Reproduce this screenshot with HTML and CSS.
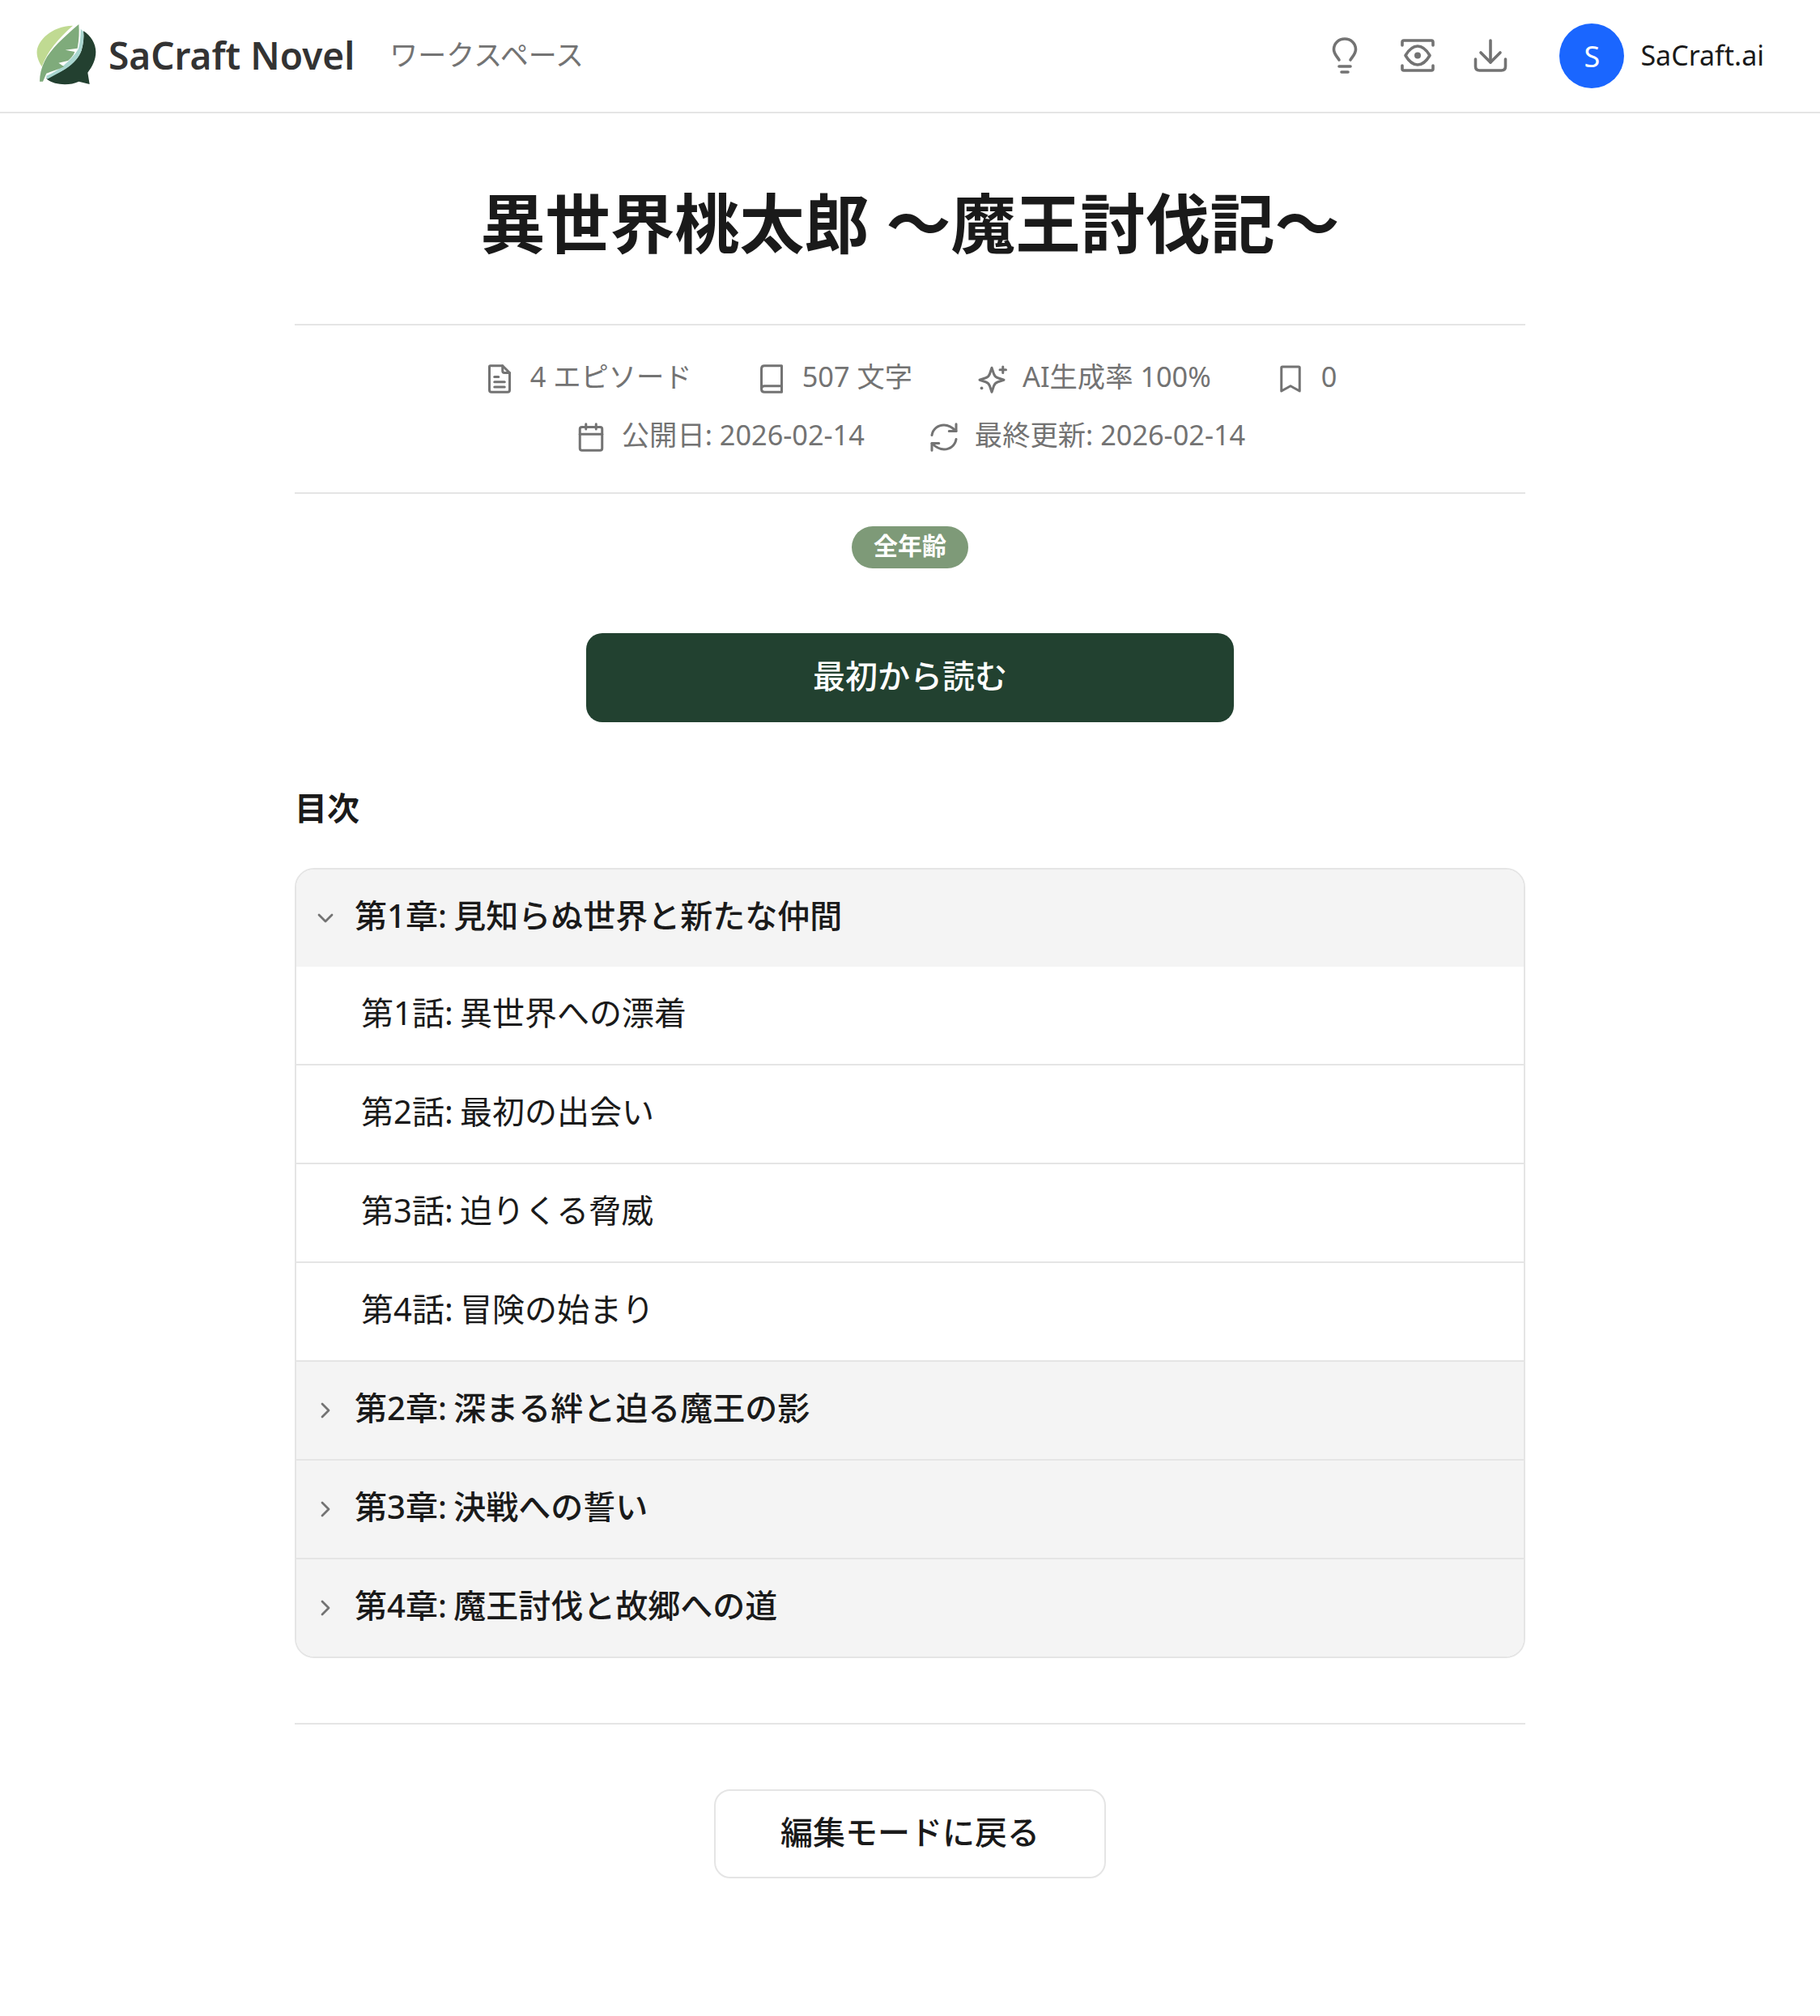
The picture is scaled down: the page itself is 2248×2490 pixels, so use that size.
FILE: index.html
```html
<!DOCTYPE html>
<html lang="ja">
<head>
    <meta charset="UTF-8">
    <meta name="viewport" content="width=device-width, initial-scale=1.0">
    <title>異世界桃太郎 〜魔王討伐記〜 - SaCraft Novel</title>
    <link rel="stylesheet" href="styles.css">
</head>
<body>
    <header class="topbar">
        <div class="topbar-left">
            <svg class="logo" viewBox="48 30 240 240" aria-hidden="true">
                <path d="M222 58 C250 75 268 105 268 135 C268 165 255 190 238 212 L245 255 L205 245 C170 262 115 258 88 238 L85 232 C130 215 195 185 215 130 C222 105 225 80 222 58 Z" fill="#234030"/>
                <path d="M212 50 L222 60 C224 85 222 105 215 130 C205 160 175 190 140 208 L88 236 L84 224 C130 205 175 170 203 125 C210 100 212 75 212 50 Z" fill="#a9d6cf"/>
                <path d="M205 33 C207 60 206 90 200 122 L155 128 L190 135 C185 150 175 160 165 168 L130 176 L150 190 C130 200 105 208 85 215 L72 245 L60 245 C60 220 66 195 78 170 C100 125 150 80 205 33 Z" fill="#7fab7b"/>
                <path d="M183 38 C130 85 90 130 68 190 C55 170 48 150 50 130 C55 95 100 40 183 38 Z" fill="#c0da92"/>
            </svg>
            <span class="brand">SaCraft Novel</span>
            <a class="nav-link">ワークスペース</a>
        </div>
        <div class="topbar-right">
            <svg class="tool-icon" viewBox="0 0 48 48" aria-hidden="true">
                <path d="M17 29 C15 25 10.5 22 10.5 16 C10.5 8.5 16.5 3 24 3 C31.5 3 37.5 8.5 37.5 16 C37.5 22 33 25 31 29"/>
                <path d="M17 37 H31"/>
                <path d="M20 44 H28"/>
            </svg>
            <svg class="tool-icon" viewBox="0 0 48 48" aria-hidden="true">
                <path d="M5 11 V7 Q5 5 7 5 H41 Q43 5 43 7 V11"/>
                <path d="M5 36 V40 Q5 42 7 42 H41 Q43 42 43 40 V36"/>
                <path d="M9 23.5 C14 15 19 12 24 12 C29 12 34 15 39 23.5 C34 32 29 35 24 35 C19 35 14 32 9 23.5 Z"/>
                <circle class="filled" cx="24" cy="23.5" r="4"/>
            </svg>
            <svg class="tool-icon" viewBox="0 0 48 48" aria-hidden="true">
                <path d="M24 5 V32"/>
                <path d="M12 20 L24 32 L36 20"/>
                <path d="M5.5 28 V37 Q5.5 42 10.5 42 H37.5 Q42.5 42 42.5 37 V28"/>
            </svg>
            <div class="user">
                <span class="avatar">S</span>
                <span class="user-name">SaCraft.ai</span>
            </div>
        </div>
    </header>

    <main class="content">
        <h1 class="work-title">異世界桃太郎 〜魔王討伐記〜</h1>

        <div class="meta">
            <div class="meta-row">
                <span class="meta-item">
                    <svg class="meta-icon" viewBox="0 0 32 32" aria-hidden="true">
                        <path d="M7 3 H19 L26 10 V27 Q26 29 24 29 H8 Q6 29 6 27 V4 Q6 3 7 3 Z"/>
                        <path d="M19 3 V8 Q19 10 21 10 H26"/>
                        <path d="M11 14 H15"/>
                        <path d="M11 19 H21"/>
                        <path d="M11 24 H21"/>
                    </svg>
                    4 エピソード
                </span>
                <span class="meta-item">
                    <svg class="meta-icon" viewBox="0 0 32 32" aria-hidden="true">
                        <path d="M6 26 V6 Q6 3 9 3 H26 V29 H9 Q6 29 6 26 Q6 23 9 23 H26"/>
                    </svg>
                    507 文字
                </span>
                <span class="meta-item">
                    <svg class="meta-icon" viewBox="0 0 32 32" aria-hidden="true">
                        <path d="M16 5 L18 11 Q19 14 22 15 L28 17 L22 19 Q19 20 18 23 L16 29 L14 23 Q13 20 10 19 L4 17 L10 15 Q13 14 14 11 Z"/>
                        <path d="M27 4 V10"/>
                        <path d="M24 7 H30"/>
                        <circle class="filled" cx="6" cy="25" r="1.5"/>
                    </svg>
                    AI生成率 100%
                </span>
                <span class="meta-item">
                    <svg class="meta-icon" viewBox="0 0 32 32" aria-hidden="true">
                        <path d="M7 28 V5 Q7 4 8 4 H24 Q25 4 25 5 V28 L16 23 Z"/>
                    </svg>
                    0
                </span>
            </div>
            <div class="meta-row">
                <span class="meta-item">
                    <svg class="meta-icon" viewBox="0 0 32 32" aria-hidden="true">
                        <path d="M5 8 Q5 6 7 6 H25 Q27 6 27 8 V27 Q27 29 25 29 H7 Q5 29 5 27 Z"/>
                        <path d="M5 13 H27"/>
                        <path d="M11 3 V8"/>
                        <path d="M21 3 V8"/>
                    </svg>
                    公開日: 2026-02-14
                </span>
                <span class="meta-item">
                    <svg class="meta-icon" viewBox="0 0 32 32" aria-hidden="true">
                        <path d="M4 14 C5 8 10 4 16 4 C21 4 24 6 28 10"/>
                        <path d="M28 3 V10 H21"/>
                        <path d="M28 18 C27 24 22 28 16 28 C11 28 8 26 4 22"/>
                        <path d="M4 29 V22 H11"/>
                    </svg>
                    最終更新: 2026-02-14
                </span>
            </div>
        </div>

        <div class="badge-row">
            <span class="badge">全年齢</span>
        </div>

        <div class="primary-row">
            <button class="btn-primary" type="button">最初から読む</button>
        </div>

        <h2 class="toc-title">目次</h2>

        <div class="toc">
            <div class="chapter chapter-open">
                <svg class="chevron" viewBox="0 0 24 24" aria-hidden="true"><path d="M4 8 L12 16 L20 8"/></svg>
                <span class="row-label">第1章: 見知らぬ世界と新たな仲間</span>
            </div>
            <a class="episode"><span class="row-label">第1話: 異世界への漂着</span></a>
            <a class="episode"><span class="row-label">第2話: 最初の出会い</span></a>
            <a class="episode"><span class="row-label">第3話: 迫りくる脅威</span></a>
            <a class="episode"><span class="row-label">第4話: 冒険の始まり</span></a>
            <div class="chapter">
                <svg class="chevron" viewBox="0 0 24 24" aria-hidden="true"><path d="M8 4 L16 12 L8 20"/></svg>
                <span class="row-label">第2章: 深まる絆と迫る魔王の影</span>
            </div>
            <div class="chapter">
                <svg class="chevron" viewBox="0 0 24 24" aria-hidden="true"><path d="M8 4 L16 12 L8 20"/></svg>
                <span class="row-label">第3章: 決戦への誓い</span>
            </div>
            <div class="chapter">
                <svg class="chevron" viewBox="0 0 24 24" aria-hidden="true"><path d="M8 4 L16 12 L8 20"/></svg>
                <span class="row-label">第4章: 魔王討伐と故郷への道</span>
            </div>
        </div>

        <div class="back-row">
            <button class="btn-back" type="button">編集モードに戻る</button>
        </div>
    </main>
</body>
</html>
```

FILE: styles.css
```css
:root {
    --text-color: #1a1a1a;
    --muted-color: #737373;
    --border-color: #e5e5e5;
    --primary-color: #224130;
    --sage-color: #7e9a78;
    --blue-color: #1a66ff;
    --panel-color: #f4f4f4;
}

body {
    margin: 0;
    background-color: #fff;
    color: var(--text-color);
    font-family: 'Noto Sans', 'Noto Sans CJK JP', sans-serif;
}

.topbar {
    display: flex;
    justify-content: space-between;
    align-items: center;
    box-sizing: border-box;
    height: 140px;
    padding: 0 69px 0 45px;
    border-bottom: 2px solid var(--border-color);
}

.topbar-left {
    display: flex;
    align-items: center;
}

.logo {
    width: 80px;
    height: 80px;
    margin-right: 9px;
}

.brand {
    padding-bottom: 2px;
    font-size: 46px;
    font-weight: 600;
    color: #333;
    margin-right: 43px;
}

.nav-link {
    padding-bottom: 8px;
    font-size: 35px;
    color: var(--muted-color);
}

.topbar-right {
    display: flex;
    align-items: center;
}

.tool-icon {
    width: 48px;
    height: 48px;
    margin-right: 42px;
    fill: none;
    stroke: var(--muted-color);
    stroke-width: 3.6;
    stroke-linecap: round;
    stroke-linejoin: round;
}

.tool-icon .filled {
    fill: var(--muted-color);
    stroke: none;
}

.user {
    display: flex;
    align-items: center;
    margin-left: 19px;
}

.avatar {
    display: flex;
    justify-content: center;
    align-items: center;
    width: 80px;
    height: 80px;
    margin-right: 20px;
    border-radius: 50%;
    background-color: var(--blue-color);
    color: #fff;
    font-size: 36px;
}

.user-name {
    padding-bottom: 3px;
    font-size: 34px;
}

.content {
    box-sizing: border-box;
    width: 1520px;
    margin: 0 auto;
}

.work-title {
    margin: 0;
    padding: 71px 0 61px;
    font-size: 80px;
    line-height: 128px;
    font-weight: 700;
    text-align: center;
}

.meta {
    display: flex;
    flex-direction: column;
    gap: 24px;
    padding: 39px 0 47px;
    border-top: 2px solid var(--border-color);
    border-bottom: 2px solid var(--border-color);
    color: var(--muted-color);
    font-size: 34.3px;
    line-height: 48px;
}

.meta-row {
    display: flex;
    justify-content: center;
    gap: 78px;
}

.meta-item {
    display: flex;
    align-items: center;
    gap: 18px;
}

.meta-icon {
    width: 40px;
    height: 40px;
    margin-top: 6px;
    fill: none;
    stroke: var(--muted-color);
    stroke-width: 2.4;
    stroke-linecap: round;
    stroke-linejoin: round;
}

.meta-icon .filled {
    fill: var(--muted-color);
    stroke: none;
}

.badge-row {
    display: flex;
    justify-content: center;
    padding-top: 40px;
}

.badge {
    padding: 0 27px;
    border-radius: 26px;
    background-color: var(--sage-color);
    color: #fff;
    font-size: 30px;
    font-weight: 700;
    line-height: 48px;
    height: 52px;
}

.primary-row {
    display: flex;
    justify-content: center;
    padding-top: 80px;
}

.btn-primary {
    width: 800px;
    height: 110px;
    padding: 0 0 8px;
    border: none;
    border-radius: 20px;
    background-color: var(--primary-color);
    color: #fff;
    font-family: inherit;
    font-size: 40px;
    font-weight: 500;
}

.toc-title {
    margin: 0;
    padding: 79px 0 47px;
    font-size: 40px;
    line-height: 54px;
    font-weight: 700;
}

.toc {
    border: 2px solid var(--border-color);
    border-radius: 24px;
    overflow: hidden;
}

.chapter {
    display: flex;
    align-items: center;
    height: 120px;
    padding-left: 24px;
    border-top: 2px solid var(--border-color);
    background-color: var(--panel-color);
    font-size: 40px;
    font-weight: 500;
}

.chapter-open {
    border-top: none;
}

.chevron {
    width: 24px;
    height: 24px;
    margin-right: 24px;
    fill: none;
    stroke: var(--muted-color);
    stroke-width: 2.8;
    stroke-linecap: round;
    stroke-linejoin: round;
}

.episode {
    display: flex;
    align-items: center;
    height: 120px;
    padding-left: 80px;
    border-top: 2px solid var(--border-color);
    font-size: 40px;
}

.chapter-open + .episode {
    border-top: none;
}

.row-label {
    padding-bottom: 10px;
    word-spacing: -2px;
}

.back-row {
    display: flex;
    justify-content: center;
    margin-top: 80px;
    padding: 80px 0;
    border-top: 2px solid var(--border-color);
}

.btn-back {
    width: 484px;
    height: 110px;
    padding: 0 0 8px;
    border: 2px solid var(--border-color);
    border-radius: 20px;
    background-color: #fff;
    color: var(--text-color);
    font-family: inherit;
    font-size: 40px;
    font-weight: 500;
}
```
